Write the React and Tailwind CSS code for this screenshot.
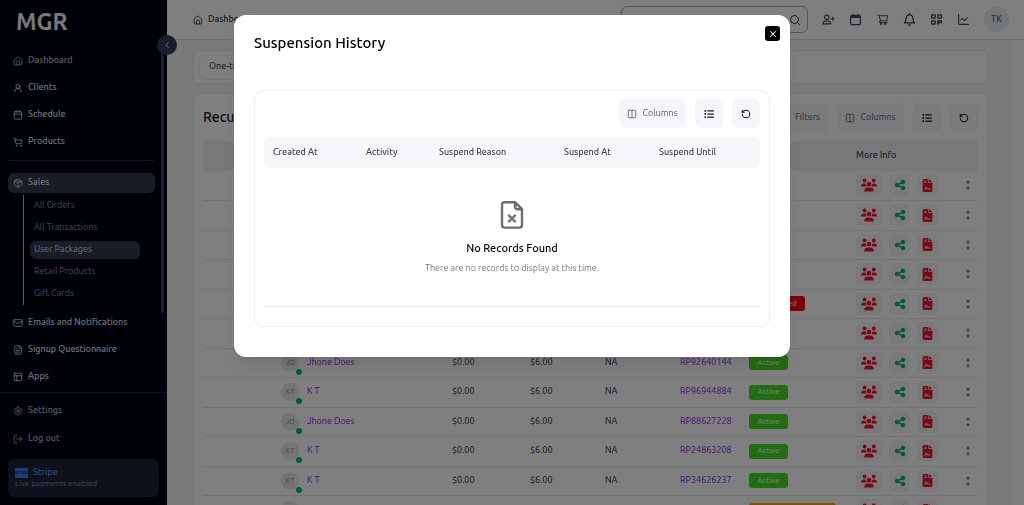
import React from "react";
import {
  LuUserRound, LuCalendar, LuShoppingCart, LuPackage, LuMail, LuFileText,
  LuPanelsTopLeft, LuSettings, LuLogOut, LuChevronLeft, LuSearch, LuColumns2,
  LuRotateCcw, LuX, LuChartLine,
} from "react-icons/lu";
import { FaUsers, FaShareNodes, FaFileContract, FaListUl, FaRegBell } from "react-icons/fa6";
import { AiOutlineShoppingCart } from "react-icons/ai";

function HomeIcon({ className }) {
  return (
    <svg viewBox="0 0 24 24" className={className} fill="none" stroke="currentColor" strokeWidth="2" strokeLinecap="round" strokeLinejoin="round">
      <path d="M3 10.8a3 3 0 0 1 1.1-2.3l5.9-5a3.1 3.1 0 0 1 4 0l5.9 5a3 3 0 0 1 1.1 2.3V19a2.5 2.5 0 0 1-2.5 2.5h-13A2.5 2.5 0 0 1 3 19zM8 21.5V16a4 4 0 0 1 8 0v5.5" />
    </svg>
  );
}

function AddUserIcon({ className }) {
  return (
    <svg viewBox="0 0 26 24" className={className} fill="none" stroke="currentColor" strokeWidth="2.2" strokeLinecap="round" strokeLinejoin="round">
      <circle cx="9.500" cy="7.500" r="4.300" />
      <path d="M1.800 20.800c0-3.800 2.700-5.800 5.700-5.800h4c3 0 5.700 2 5.700 5.800zM21.500 7v7M18 10.500h7" />
    </svg>
  );
}

function TopCalendarIcon({ className }) {
  return (
    <svg viewBox="0 0 24 24" className={className} fill="none" stroke="currentColor" strokeWidth="2.2" strokeLinecap="round" strokeLinejoin="round">
      <rect x="3" y="4.5" width="18" height="17" rx="2.5" />
      <path d="M7.5 1.8v3M16.5 1.8v3" />
      <path d="M3.5 7h17" strokeWidth="4" strokeLinecap="butt" />
    </svg>
  );
}

function QrIcon({ className }) {
  return (
    <svg viewBox="0 0 24 24" className={className} fill="none" stroke="currentColor" strokeWidth="2.6">
      <rect x="3" y="3.5" width="6.5" height="6" rx="1" />
      <rect x="14.5" y="3.5" width="6.5" height="6" rx="1" />
      <rect x="3" y="14.5" width="6.5" height="6" rx="1" />
      <path d="M14.5 21.8v-7.3H21v4.5M14.5 18H19" />
    </svg>
  );
}

function MoreIcon({ className }) {
  return (
    <svg viewBox="0 0 4 12" className={className} fill="currentColor">
      <circle cx="2" cy="3.2" r="1.6" />
      <circle cx="2" cy="8.8" r="1.6" />
    </svg>
  );
}

const mainNav = [
  { label: "Dashboard", Icon: HomeIcon, dim: true },
  { label: "Clients", Icon: LuUserRound },
  { label: "Schedule", Icon: LuCalendar },
  { label: "Products", Icon: LuShoppingCart },
];
const salesNav = ["All Orders", "All Transactions", "User Packages", "Retail Products", "Gift Cards"];
const moreNav = [
  { label: "Emails and Notifications", Icon: LuMail },
  { label: "Signup Questionnaire", Icon: LuFileText },
  { label: "Apps", Icon: LuPanelsTopLeft },
];

function NavLink({ label, Icon, dim, active }) {
  return (
    <a
      href="#"
      className={`flex h-5 items-center gap-[5px] rounded-md px-[5px] text-[9px] font-medium whitespace-nowrap ${
        active ? "bg-[#323b50]" : ""
      } ${dim ? "text-[#b4b8c6]" : "text-[#dfe1ea]"}`}
    >
      <Icon className="size-[10px] shrink-0" />
      {label}
    </a>
  );
}

function Sidebar() {
  return (
    <aside className="relative flex w-[167px] shrink-0 flex-col bg-[#020012] text-white">
      <div className="px-4 pt-2 text-[23px] leading-7 font-semibold text-[#f0f0f0]">MGR</div>
      <nav className="mt-[15px] min-h-0 flex-1 overflow-hidden pr-3 pl-2">
        <div className="flex flex-col gap-[7px]">
          {mainNav.map((n) => <NavLink key={n.label} {...n} />)}
        </div>
        <hr className="mt-2 mb-3 border-[#1c2233]" />
        <NavLink label="Sales" Icon={LuPackage} active />
        <div className="mt-[2px] ml-[15px] flex flex-col gap-1 border-l border-[#b8bac2] py-[2px] pr-[15px] pl-[6px]">
          {salesNav.map((s) => (
            <a
              key={s}
              href="#"
              className={`flex h-[18px] items-center rounded-md px-1 text-[9px] ${
                s === "User Packages" ? "bg-[#323b50] text-[#d4d7e2]" : "text-[#8f95a8]"
              }`}
            >
              {s}
            </a>
          ))}
        </div>
        <div className="mt-2 flex flex-col gap-[7px]">
          {moreNav.map((n) => <NavLink key={n.label} {...n} />)}
        </div>
      </nav>
      <div className="absolute top-11 right-[3px] h-[269px] w-[3px] rounded-full bg-[#3b4763]" />
      <button
        type="button"
        aria-label="Collapse sidebar"
        className="absolute top-[35px] -right-[10px] z-10 flex size-5 items-center justify-center rounded-full bg-[#323c58] text-white"
      >
        <LuChevronLeft className="size-[10px]" />
      </button>
      <div className="flex flex-col gap-2 border-t border-[#1c2233] px-2 pt-2 pb-2">
        <NavLink label="Settings" Icon={LuSettings} dim />
        <NavLink label="Log out" Icon={LuLogOut} dim />
        <div className="flex h-[38px] mt-[2px] flex-col justify-center rounded-md bg-[#1c2236] px-[7px]">
          <div className="flex items-center gap-[5px] text-[9px] leading-[11px] font-medium text-[#5a8cf8]">
            <span className="flex h-[10px] w-[13px] items-center justify-center bg-[#3f7cf0] text-[5px] leading-none font-bold text-[#16284f]">
              stripe
            </span>
            Stripe
          </div>
          <div className="text-[8px] leading-[11px] text-[#8a90a2]">Live payments enabled</div>
        </div>
      </div>
    </aside>
  );
}

function Header() {
  const icons = [
    ["Add client", AddUserIcon],
    ["Calendar", TopCalendarIcon],
    ["Cart", AiOutlineShoppingCart],
    ["Notifications", FaRegBell],
    ["QR code", QrIcon],
    ["Reports", LuChartLine],
  ];
  return (
    <header className="flex h-10 shrink-0 items-center border-b border-[#dddfe2] bg-white pr-[15px] pl-[26px]">
      <a href="#" className="flex items-center gap-[5px] text-[9px] font-medium text-[#2c3140]">
        <HomeIcon className="size-[10px]" />
        Dashboard
      </a>
      <div className="ml-auto flex h-[27px] w-[187px] items-center rounded-md border border-[#a9adb5] px-[6px]">
        <input aria-label="Search" className="min-w-0 flex-1 bg-transparent text-[9px] outline-none" />
        <LuSearch className="size-3 text-[#2c3140]" />
      </div>
      <div className="ml-[14px] flex items-center gap-[14px] text-[#3c4354]">
        {icons.map(([label, Icon]) => (
          <button key={label} type="button" aria-label={label} className="flex w-[13px] justify-center">
            <Icon className="size-[13px] shrink-0" />
          </button>
        ))}
        <span className="flex size-[25px] items-center justify-center rounded-full bg-[#e9ecf4] text-[9px] font-medium text-[#5b6272]">
          TK
        </span>
      </div>
    </header>
  );
}

function Toolbar({ filters }) {
  const base = "flex h-[29px] items-center rounded-md bg-[#f5f6fb]";
  return (
    <div className="flex justify-end gap-[9px]">
      {filters && (
        <button type="button" className={`${base} w-[58px] justify-end pr-2 text-[9px] text-[#5b6070]`}>Filters</button>
      )}
      <button type="button" className={`${base} w-[67px] justify-center gap-[5px] text-[9px] text-[#5b6070]`}>
        <LuColumns2 className="size-[10px]" />
        Columns
      </button>
      <button type="button" aria-label="List view" className={`${base} w-7 justify-center text-[#15181f]`}>
        <FaListUl className="size-[10px]" />
      </button>
      <button type="button" aria-label="Refresh" className={`${base} w-7 justify-center text-[#15181f]`}>
        <LuRotateCcw className="size-[10px]" strokeWidth={2.5} />
      </button>
    </div>
  );
}

const people = { JD: "Jhone Does", KT: "K T" };
const rows = [
  ["KT", "RP10428817", "Active"],
  ["JD", "RP55210936", "Active"],
  ["KT", "RP71930284", "Active"],
  ["KT", "RP38047715", "Active"],
  ["JD", "RP60914273", "Suspended"],
  ["KT", "RP47720651", "Active"],
  ["JD", "RP92640144", "Active"],
  ["KT", "RP96944884", "Active"],
  ["JD", "RP88627228", "Active"],
  ["KT", "RP24863208", "Active"],
  ["KT", "RP34626237", "Active"],
  ["KT", "RP50183392", "Pending Cancelation"],
];
const badgeStyle = {
  Active: "w-[39px] bg-[#45d924]",
  Suspended: "w-14 bg-[#f5000a]",
  "Pending Cancelation": "w-[87px] bg-[#faa500]",
};

function PackageRow({ initials, code, status }) {
  const chip = "flex h-[22px] items-center justify-center rounded-md bg-[#f5f5f8]";
  return (
    <tr className="h-[29px] border-b border-[#e6e8ec] even:h-[30px]">
      <td />
      <td>
        <div className="flex items-center gap-2">
          <span className="relative flex size-[18px] items-center justify-center rounded-full bg-[#e8e9ec] text-[8px] text-[#8d929c]">
            {initials}
            <span className="absolute -right-[3px] -bottom-[3px] size-[6px] rounded-full bg-[#00b96b]" />
          </span>
          <a href="#" className="text-[#8420e8]">{people[initials]}</a>
        </div>
      </td>
      <td>$0.00</td>
      <td>$6.00</td>
      <td>NA</td>
      <td><a href="#" className="text-[#8420e8]">{code}</a></td>
      <td>
        <span className={`flex h-[15px] items-center justify-center rounded-[3px] text-[8px] whitespace-nowrap text-white ${badgeStyle[status]}`}>
          {status}
        </span>
      </td>
      <td>
        <div className="flex items-center">
          <button type="button" aria-label="Members" className={`${chip} w-[26px] text-[#f0142c]`}>
            <FaUsers className="size-4" />
          </button>
          <button type="button" aria-label="Share" className={`${chip} ml-[7px] w-[21px] text-[#00b070]`}>
            <FaShareNodes className="size-3" />
          </button>
          <button type="button" aria-label="Contract" className={`${chip} ml-[7px] w-[21px] text-[#f0142c]`}>
            <FaFileContract className="size-[13px]" />
          </button>
          <button type="button" aria-label="More actions" className="mr-2 ml-auto text-[#858a96]">
            <MoreIcon className="h-3 w-1" />
          </button>
        </div>
      </td>
    </tr>
  );
}

function PackagesPage() {
  return (
    <main className="min-h-0 flex-1 overflow-hidden border-r-[12px] border-[#fbfcfc] bg-[#f3f7f6] pt-[10px] pr-6 pl-[26px]">
      <div className="flex h-[34px] items-center rounded-md border border-[#e8eaed] bg-white px-[5px]">
        <button type="button" className="h-[25px] rounded-md border border-[#e8eaed] px-[9px] text-[9px] font-medium text-[#4b5060]">
          One-time
        </button>
      </div>
      <section className="mt-[9px] rounded-lg border border-[#e8eaed] bg-white px-[9px] pt-[9px]">
        <div className="flex items-center justify-between">
          <h1 className="text-[14px] font-medium text-[#14171f]">Recurring</h1>
          <Toolbar filters />
        </div>
        <table className="mt-[9px] w-full table-fixed border-collapse text-left text-[9px] text-[#22252e]">
          <colgroup>
            <col />
            <col className="w-[171px]" />
            <col className="w-[78px]" />
            <col className="w-[75px]" />
            <col className="w-[75px]" />
            <col className="w-[69px]" />
            <col className="w-[107px]" />
            <col className="w-[122px]" />
          </colgroup>
          <thead>
            <tr className="h-[30px] bg-[#f0f1f6] text-[#3f4452]">
              <th />
              {["User", "Discount", "Price", "Expiry", "Code", "Status", "More Info"].map((h) => (
                <th key={h} className="font-medium">{h}</th>
              ))}
            </tr>
          </thead>
          <tbody>
            {rows.map(([initials, code, status]) => (
              <PackageRow key={code} initials={initials} code={code} status={status} />
            ))}
          </tbody>
        </table>
      </section>
    </main>
  );
}

function SuspensionDialog() {
  return (
    <div className="fixed inset-0 z-20 flex items-start justify-center bg-black/50 pt-[15px]">
      <div
        role="dialog"
        aria-modal="true"
        aria-labelledby="dialog-title"
        className="relative w-[556px] rounded-xl bg-white px-5 pt-4 pb-[30px] shadow-lg"
      >
        <h2 id="dialog-title" className="text-[15px] leading-6 font-medium text-black">Suspension History</h2>
        <button
          type="button"
          aria-label="Close"
          className="absolute top-[11px] right-[10px] flex size-[15px] items-center justify-center rounded-[3px] bg-black text-white"
        >
          <LuX className="size-[10px]" strokeWidth={2.5} />
        </button>
        <div className="mt-[35px] rounded-[10px] border border-[#eceef0] px-[9px] pt-2 pb-[19px]">
          <Toolbar />
          <table className="mt-[9px] w-full table-fixed text-left text-[9px]">
            <colgroup>
              <col className="w-[102px]" />
              <col className="w-[73px]" />
              <col className="w-[125px]" />
              <col className="w-[95px]" />
              <col />
            </colgroup>
            <thead>
              <tr className="h-[31px] text-[#3f424a]">
                <th className="rounded-l-md bg-[#f6f7fb] pl-[9px] font-medium">Created At</th>
                <th className="bg-[#f6f7fb] font-medium">Activity</th>
                <th className="bg-[#f6f7fb] font-medium">Suspend Reason</th>
                <th className="bg-[#f6f7fb] font-medium">Suspend At</th>
                <th className="rounded-r-md bg-[#f6f7fb] font-medium">Suspend Until</th>
              </tr>
            </thead>
            <tbody>
              <tr>
                <td colSpan={5} className="h-[138px] border-b border-[#e6e8ea] pt-[5px]">
                  <div className="flex flex-col items-center">
                    <svg viewBox="0 0 24 30" className="h-[30px] w-6 text-[#6e6e6e]" fill="none" stroke="currentColor" strokeWidth="2.4" strokeLinecap="round" strokeLinejoin="round">
                      <path d="M15 2.2H4.6A2.6 2.6 0 0 0 2 4.8V25a2.6 2.6 0 0 0 2.6 2.6h14.8A2.6 2.6 0 0 0 22 25V9.2zM15 2.2v4.4a2.6 2.6 0 0 0 2.6 2.6H22M9 15.5l6 6M15 15.5l-6 6" />
                    </svg>
                    <p className="mt-2 text-[11px] leading-5 font-medium text-black">No Records Found</p>
                    <p className="text-[9px] leading-5 text-[#75787e]">There are no records to display at this time.</p>
                  </div>
                </td>
              </tr>
            </tbody>
          </table>
        </div>
      </div>
    </div>
  );
}

export default function App() {
  return (
    <div className="flex h-screen overflow-hidden bg-white font-['Ubuntu','Noto_Sans',sans-serif]">
      <Sidebar />
      <div className="flex min-w-0 flex-1 flex-col">
        <Header />
        <PackagesPage />
      </div>
      <SuspensionDialog />
    </div>
  );
}
